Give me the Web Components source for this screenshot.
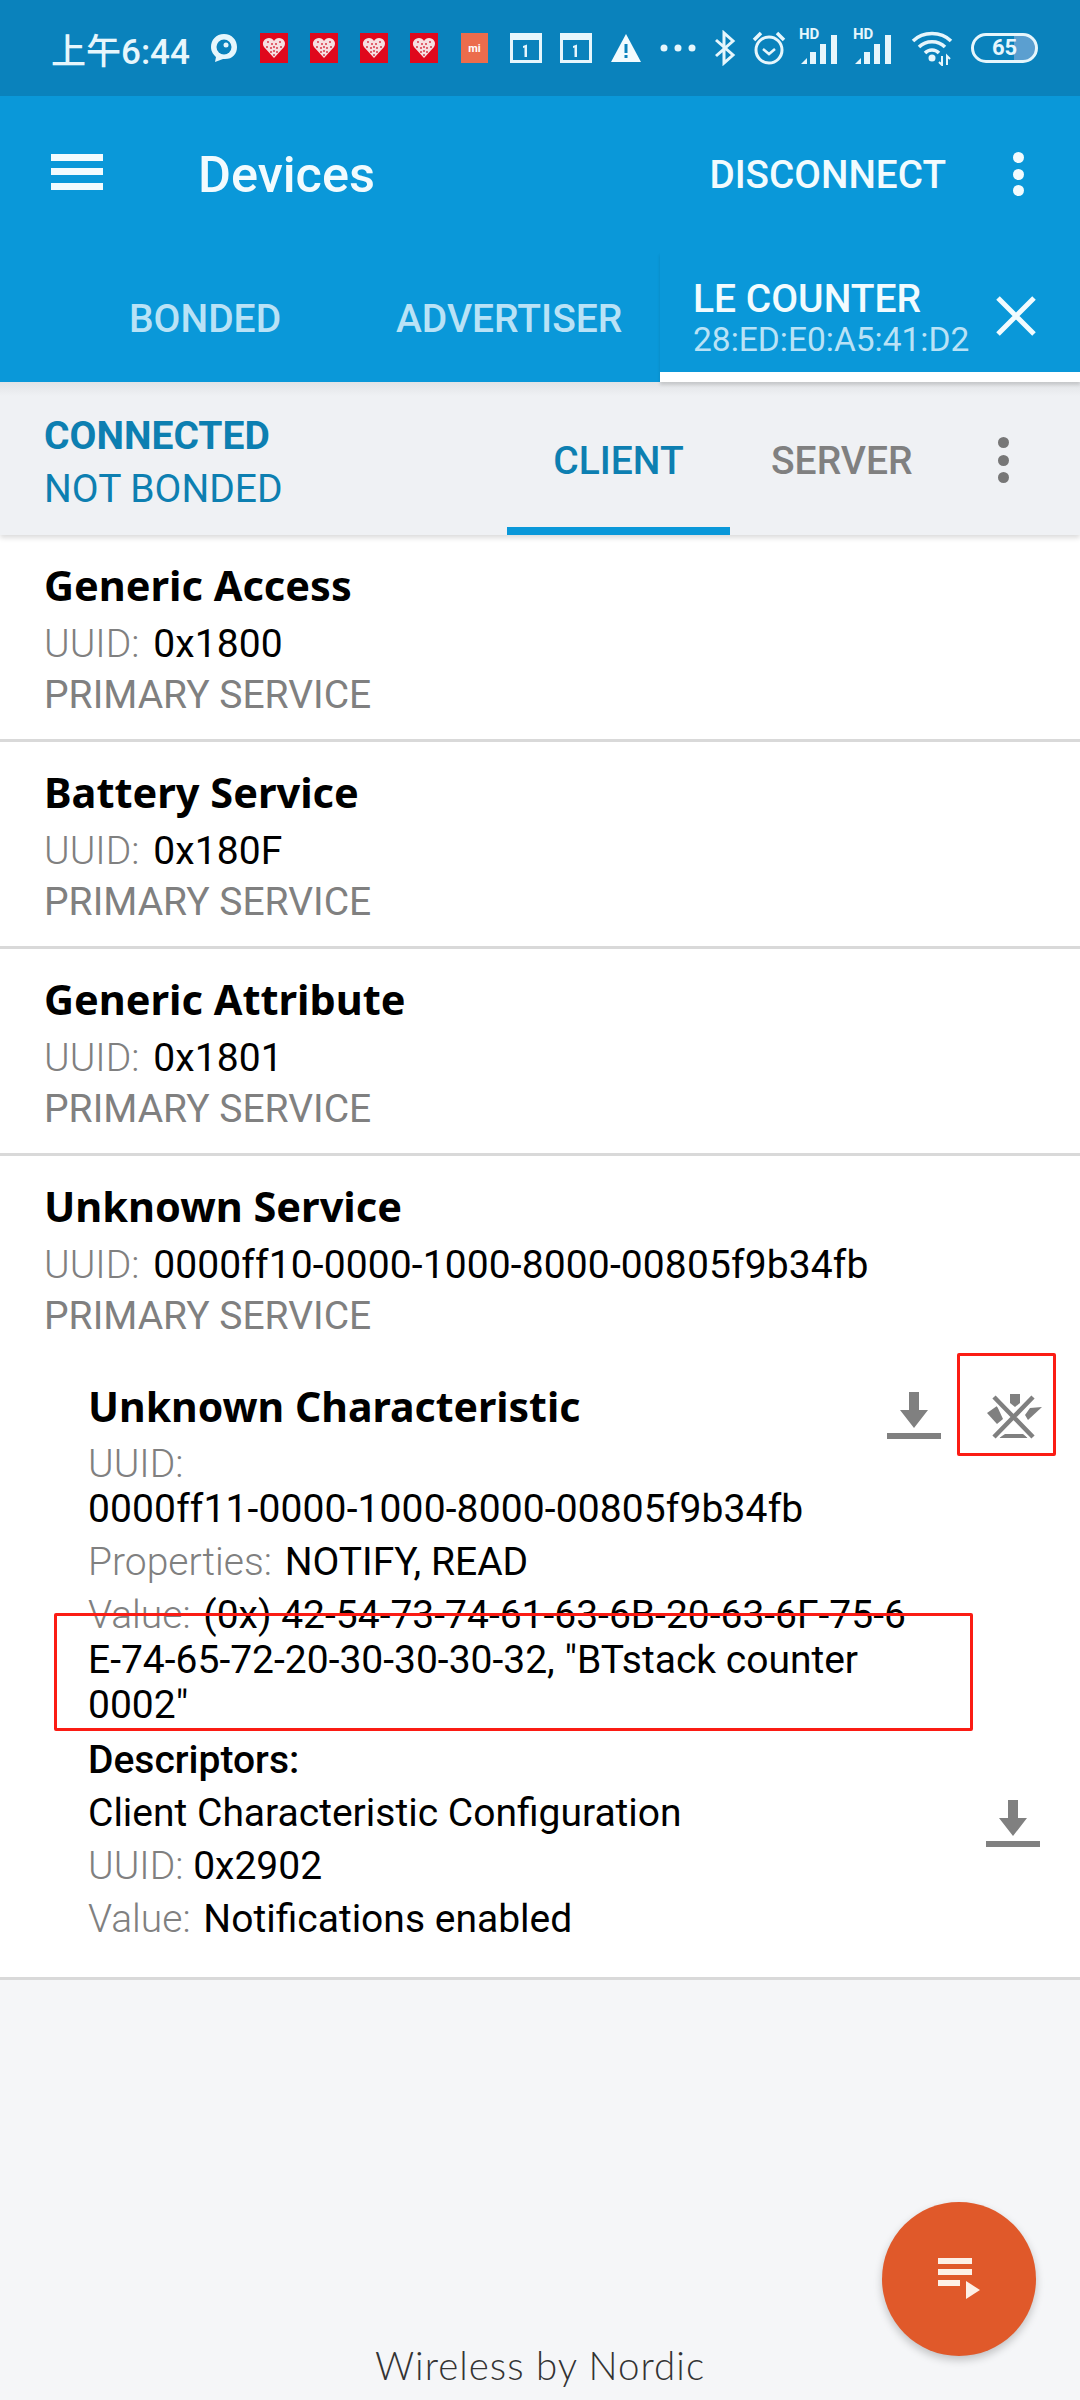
<!DOCTYPE html>
<html>
<head>
<meta charset="utf-8">
<style>
  html, body { margin: 0; padding: 0; }
  body {
    width: 1080px;
    height: 2400px;
    overflow: hidden;
    position: relative;
    display: flex;
    flex-direction: column;
    background: #f5f6f8;
    font-family: Roboto, "Noto Sans CJK SC", sans-serif;
  }
</style>
</head>
<body>
<status-bar></status-bar>
<app-toolbar></app-toolbar>
<device-tabs></device-tabs>
<conn-header></conn-header>
<service-list>
  <service-row name="Generic Access" uuid="0x1800"></service-row>
  <service-row name="Battery Service" uuid="0x180F"></service-row>
  <service-row name="Generic Attribute" uuid="0x1801"></service-row>
  <service-row name="Unknown Service" uuid="0000ff10-0000-1000-8000-00805f9b34fb" last>
    <char-block></char-block>
  </service-row>
</service-list>
<app-footer></app-footer>
<mark-box style="left:957px;top:1353px;width:99px;height:103px"></mark-box>
<mark-box style="left:54px;top:1613px;width:919px;height:118px"></mark-box>
<run-fab></run-fab>

<script>
  const HEART = `<svg width="28" height="30" viewBox="0 0 28 30"><rect width="28" height="30" fill="#e0081c"/>
    <path d="M14 25 L4 14 C1 9 5 5 9 5 C11 5 13 6 14 8 C15 6 17 5 19 5 C23 5 27 9 24 14 Z" fill="#f6dfe0"/>
    <g fill="#d8384a"><circle cx="8" cy="9" r="1"/><circle cx="12" cy="11" r="1"/><circle cx="16" cy="11" r="1"/><circle cx="20" cy="9" r="1"/><circle cx="7" cy="14" r="1"/><circle cx="11" cy="15" r="1"/><circle cx="14" cy="14" r="1"/><circle cx="17" cy="15" r="1"/><circle cx="21" cy="14" r="1"/><circle cx="11" cy="19" r="1"/><circle cx="14" cy="18" r="1"/><circle cx="17" cy="19" r="1"/><circle cx="14" cy="22" r="1"/></g></svg>`;

  const CAL = `<svg width="32" height="30" viewBox="0 0 32 30"><rect x="1.5" y="1.5" width="29" height="27" fill="none" stroke="#e6f6fc" stroke-width="3"/><rect x="1" y="1" width="30" height="6" fill="#e6f6fc"/><path d="M13 13 L17 11.500 V24 H14.500 V14.500 L13 15 Z" fill="#e6f6fc"/></svg>`;

  const SIGNAL = `<svg width="42" height="30" viewBox="0 0 42 30"><g fill="#e6f6fc"><path d="M1 30 L7 24 V30 Z"/><rect x="10" y="18" width="6" height="12"/><rect x="20" y="10" width="6" height="20"/><rect x="31" y="1" width="6" height="29"/></g></svg>`;

  const DOWNLOAD = `<svg width="54" height="47" viewBox="0 0 54 47"><path d="M22 0 H32 V18 H41 L27 36 L13 18 H22 Z" fill="#808080"/><rect y="41" width="54" height="6" fill="#808080"/></svg>`;

  class StatusBar extends HTMLElement {
    constructor() {
      super();
      this.attachShadow({ mode: 'open' }).innerHTML = `
        <style>
          :host { display: flex; align-items: center; flex: none; height: 96px; padding: 0 0 0 51px; box-sizing: border-box; background: #0a82bc; color: #e6f6fc; }
          .time { font: 500 35px Roboto, "Noto Sans CJK SC", sans-serif; width: 143px; white-space: nowrap; }
          svg { display: block; flex: none; }
          .row { display: flex; align-items: center; gap: 22px; margin-left: 22px; }
          .mi { width: 27px; height: 30px; background: #ec6c4c; color: #fff; font: 700 11px Roboto, sans-serif; display: flex; align-items: center; justify-content: center; margin-left: 1px; }
          .sig { position: relative; width: 42px; height: 30px; margin-top: 1px; }
          .sig b { position: absolute; left: -1px; top: -9px; font: 700 15px Roboto, sans-serif; }
          .batt { position: relative; width: 67px; height: 30px; box-sizing: border-box; border: 3px solid #e6f6fc; border-radius: 15px; overflow: hidden; text-align: center; font: 700 22px/24px Roboto, sans-serif; background: linear-gradient(90deg, transparent 66%, #5b9fd0 66%); }
        </style>
        <span class="time">上午6:44</span>
        <svg style="margin-left:16px" width="28" height="30" viewBox="0 0 28 30"><path d="M14 1 C6 1 1 7 1 14 C1 19 4 22 6 24 L5 29 L13 26 C22 27 27 21 27 14 C27 7 22 1 14 1 Z" fill="#e6f6fc"/><circle cx="14" cy="14" r="7.500" fill="#0a82bc"/><circle cx="16" cy="12" r="2.500" fill="#e6f6fc"/></svg>
        <div class="row" style="margin-left:22px">${HEART}${HEART}${HEART}${HEART}<span class="mi">mi</span>${CAL}</div>
        <div class="row" style="margin-left:18px;gap:18px">${CAL}
          <svg width="32" height="30" viewBox="0 0 32 30"><path d="M16 1 L31 29 H1 Z" fill="#f2fbfe"/><rect x="14.500" y="11" width="3" height="9" fill="#0a82bc"/><rect x="14.500" y="22" width="3" height="3" fill="#0a82bc"/></svg>
          <svg width="36" height="10" viewBox="0 0 36 10"><g fill="#e6f6fc"><circle cx="4" cy="5" r="3.500"/><circle cx="18" cy="5" r="3.500"/><circle cx="32" cy="5" r="3.500"/></g></svg>
          <svg width="22" height="36" viewBox="0 0 22 36"><path d="M2 10 L19 25 L10 33 V3 L19 11 L2 26" fill="none" stroke="#e6f6fc" stroke-width="3"/></svg>
          <svg style="margin-left:-3px" width="36" height="34" viewBox="0 0 36 34"><circle cx="18" cy="19" r="13" fill="none" stroke="#e6f6fc" stroke-width="3"/><path d="M12 18 L18 23 L24 18" fill="none" stroke="#e6f6fc" stroke-width="2.500"/><path d="M3 9 L10 2 M33 9 L26 2" stroke="#e6f6fc" stroke-width="3.500"/></svg>
        </div>
        <span class="sig" style="margin-left:13px"><b>HD</b>${SIGNAL}</span>
        <span class="sig" style="margin-left:12px"><b>HD</b>${SIGNAL}</span>
        <svg style="margin-left:15px" width="44" height="36" viewBox="0 0 44 36"><g fill="none" stroke="#e6f6fc" stroke-width="3.500"><path d="M2 11 C12 1 30 1 40 11"/><path d="M8 17 C15 10 27 10 34 17"/><path d="M14 23 C18 19 24 19 28 23"/></g><circle cx="21" cy="28" r="3.500" fill="#e6f6fc"/><path d="M31 26 V35 L28 32 M36 35 V26 L39 29" fill="none" stroke="#e6f6fc" stroke-width="2"/></svg>
        <span class="batt" style="margin-left:16px">65</span>
      `;
    }
  }

  class AppToolbar extends HTMLElement {
    constructor() {
      super();
      this.attachShadow({ mode: 'open' }).innerHTML = `
        <style>
          :host { display: flex; align-items: center; flex: none; height: 156px; box-sizing: border-box; padding: 0 0 0 51px; background: #0a98d9; color: #f2fbfe; }
          .burger { width: 52px; height: 36px; margin-top: -5px; display: flex; flex-direction: column; justify-content: space-between; }
          .burger i { display: block; height: 7px; background: #f2fbfe; }
          .title { font: 500 50.500px/1 Roboto, sans-serif; margin: 2px 0 0 95px; flex: 1; }
          .act { font: 500 38.700px/1 Roboto, sans-serif; margin-top: 2px; }
          .dots { width: 12px; height: 44px; margin: 0 55px 0 67px; display: flex; flex-direction: column; justify-content: space-between; }
          .dots i { display: block; width: 11px; height: 11px; border-radius: 50%; background: #f2fbfe; }
        </style>
        <div class="burger"><i></i><i></i><i></i></div>
        <div class="title">Devices</div>
        <div class="act">DISCONNECT</div>
        <div class="dots"><i></i><i></i><i></i></div>
      `;
    }
  }

  class DeviceTabs extends HTMLElement {
    constructor() {
      super();
      this.attachShadow({ mode: 'open' }).innerHTML = `
        <style>
          :host { display: flex; flex: none; height: 130px; background: #0a98d9; color: #b9e2f6; font-family: Roboto, sans-serif; position: relative; z-index: 2; }
          .tab { font: 500 39px/1 Roboto, sans-serif; padding-top: 48px; width: var(--w); white-space: nowrap; }
          .cur { position: absolute; right: 0; top: 0; width: 420px; height: 130px; box-sizing: border-box; padding: 26px 0 0 33px; border-bottom: 10px solid #fff; display: flex; box-shadow: 0 3px 3px rgba(0,0,0,.12); }
          .cur .n { font: 500 39px/42px Roboto, sans-serif; color: #f2fbfe; }
          .cur .a { font: 400 33.500px/40px Roboto, sans-serif; white-space: nowrap; }
          svg { display: block; margin: 18px 0 0 27px; flex: none; }
        </style>
        <div class="tab" style="margin-left:129px;--w:267px">BONDED</div>
        <div class="tab" style="--w:264px">ADVERTISER</div>
        <div class="cur">
          <div><div class="n">LE COUNTER</div><div class="a">28:ED:E0:A5:41:D2</div></div>
          <svg width="40" height="40" viewBox="0 0 40 40"><path d="M2 2 L38 38 M38 2 L2 38" stroke="#f2fbfe" stroke-width="5"/></svg>
        </div>
      `;
    }
  }

  class ConnHeader extends HTMLElement {
    constructor() {
      super();
      this.attachShadow({ mode: 'open' }).innerHTML = `
        <style>
          :host { display: flex; flex: none; height: 153px; box-sizing: border-box; background: #eff1f4; font-family: Roboto, sans-serif; box-shadow: 0 3px 5px rgba(0,0,0,.14); position: relative; z-index: 1; background-image: linear-gradient(rgba(0,0,0,.06), transparent 14px); }
          .state { margin-left: 44px; width: 463px; padding-top: 28px; color: #0d7fb1; font-size: 39px; line-height: 53px; white-space: nowrap; }
          .state b { font-weight: 700; display: block; }
          .tab { width: 223px; box-sizing: border-box; text-align: center; font: 500 39px/1 Roboto, sans-serif; padding-top: 60px; color: #0d7fb1; border-bottom: 8px solid #0a98d9; }
          .srv { font: 500 39px/1 Roboto, sans-serif; color: #808080; padding: 60px 0 0 41px; }
          .dots { width: 11px; height: 46px; margin: 55px 0 0 85px; display: flex; flex-direction: column; justify-content: space-between; }
          .dots i { display: block; width: 11px; height: 11px; border-radius: 50%; background: #777; }
        </style>
        <div class="state"><b>CONNECTED</b>NOT BONDED</div>
        <div class="tab">CLIENT</div>
        <div class="srv">SERVER</div>
        <div class="dots"><i></i><i></i><i></i></div>
      `;
    }
  }

  class ServiceList extends HTMLElement {
    constructor() {
      super();
      this.attachShadow({ mode: 'open' }).innerHTML = `
        <style>:host { display: block; flex: none; background: #fff; }</style>
        <slot></slot>
      `;
    }
  }

  class ServiceRow extends HTMLElement {
    constructor() {
      super();
      this.attachShadow({ mode: 'open' }).innerHTML = `
        <style>
          :host { display: block; box-sizing: border-box; border-bottom: 3px solid #d9d9d9; padding: 24px 0 17px 44px; font: 400 39px/53px Roboto, sans-serif; color: #000; }
          :host([last]) { padding-bottom: 0; }
          .name { font: 700 41.500px/53px "Noto Sans", sans-serif; margin-bottom: 6px; }
          .u { color: #808080; font-weight: 300; margin-right: 4px; }
          .id { letter-spacing: .12px; }
          .p { color: #808080; margin-top: -2px; }
        </style>
        <div class="name"></div>
        <div><span class="u">UUID:</span> <span class="id"></span></div>
        <div class="p">PRIMARY SERVICE</div>
        <slot></slot>
      `;
    }
    connectedCallback() {
      this.shadowRoot.querySelector('.name').textContent = this.getAttribute('name');
      this.shadowRoot.querySelector('.id').textContent = this.getAttribute('uuid');
    }
  }

  class CharBlock extends HTMLElement {
    constructor() {
      super();
      this.attachShadow({ mode: 'open' }).innerHTML = `
        <style>
          :host { display: block; margin: 37px 0 0 44px; padding-bottom: 35px; font: 400 39px/45px Roboto, sans-serif; color: #000; white-space: nowrap; }
          .u { color: #808080; font-weight: 300; }
          .m { margin-right: 3px; }
          .hex { letter-spacing: .12px; }
          .top { display: flex; height: 54px; }
          .name { font: 700 41px/53px "Noto Sans", sans-serif; flex: 1; }
          .icons { display: flex; align-items: flex-start; padding-top: 12px; width: 193px; flex: none; }
          .icons svg { display: block; }
          p { margin: 0; }
          .gap { margin-top: 8px; }
          .desc { margin-top: 10px; font-weight: 500; }
          .drow { display: flex; margin-top: 8px; height: 45px; }
          .drow span.t { flex: 1; }
          .drow svg { display: block; margin: 9px 40px 0 0; }
        </style>
        <div class="top">
          <div class="name">Unknown Characteristic</div>
          <div class="icons">
            ${DOWNLOAD}
            <svg style="margin:1px 0 0 46px" width="56" height="46" viewBox="0 0 56 46"><g fill="#808080"><path d="M23 1 H33 V10 L28 14 L23 10 Z"/><path d="M0 20 L10 13 L16 26 L10 31 Z"/><path d="M55 14 L43 15 L38 22 L41 27 Z"/><path d="M12 45 L18 41 H36 L41 45 Z"/></g><path d="M7 4 L46 44 M46 4 L7 44" fill="none" stroke="#fff" stroke-width="9"/><path d="M7 4 L46 44 M46 4 L7 44" fill="none" stroke="#808080" stroke-width="4.500"/></svg>
          </div>
        </div>
        <p class="gap"><span class="u">UUID:</span><br><span class="hex">0000ff11-0000-1000-8000-00805f9b34fb</span></p>
        <p class="gap"><span class="u m">Properties:</span> NOTIFY, READ</p>
        <p class="gap"><span class="u m">Value:</span> (0x) 42-54-73-74-61-63-6B-20-63-6F-75-6<br>E-74-65-72-20-30-30-30-32, "BTstack counter<br>0002"</p>
        <p class="desc">Descriptors:</p>
        <div class="drow"><span class="t">Client Characteristic Configuration</span>${DOWNLOAD}</div>
        <p class="gap"><span class="u">UUID:</span> 0x2902</p>
        <p class="gap"><span class="u m">Value:</span> Notifications enabled</p>
      `;
    }
  }

  class AppFooter extends HTMLElement {
    constructor() {
      super();
      this.attachShadow({ mode: 'open' }).innerHTML = `
        <style>
          :host { display: flex; flex: 1; align-items: flex-end; justify-content: center; padding-bottom: 15px; font: 300 38.500px/40px Lato, sans-serif; letter-spacing: 1px; color: #333; }
        </style>
        <slot>Wireless by Nordic</slot>
      `;
    }
  }

  class MarkBox extends HTMLElement {
    constructor() {
      super();
      this.attachShadow({ mode: 'open' }).innerHTML = `
        <style>:host { position: absolute; box-sizing: border-box; border: 3px solid #fb1c14; border-radius: 2px; z-index: 5; }</style>
      `;
    }
  }

  class RunFab extends HTMLElement {
    constructor() {
      super();
      this.attachShadow({ mode: 'open' }).innerHTML = `
        <style>
          :host { position: absolute; left: 882px; top: 2202px; width: 154px; height: 154px; border-radius: 50%; background: #e0592a; box-shadow: 0 4px 8px rgba(0,0,0,.22); display: flex; align-items: center; justify-content: center; }
          svg { display: block; }
        </style>
        <svg width="44" height="42" viewBox="0 0 44 42"><g fill="#fdf0e6"><rect x="1" y="0" width="34" height="6"/><rect x="1" y="11" width="34" height="6"/><rect x="1" y="22" width="22" height="6"/><path d="M29 23 L43 32 L29 41 Z"/></g></svg>
      `;
    }
  }

  customElements.define('status-bar', StatusBar);
  customElements.define('app-toolbar', AppToolbar);
  customElements.define('device-tabs', DeviceTabs);
  customElements.define('conn-header', ConnHeader);
  customElements.define('service-list', ServiceList);
  customElements.define('service-row', ServiceRow);
  customElements.define('char-block', CharBlock);
  customElements.define('app-footer', AppFooter);
  customElements.define('mark-box', MarkBox);
  customElements.define('run-fab', RunFab);
</script>
</body>
</html>
